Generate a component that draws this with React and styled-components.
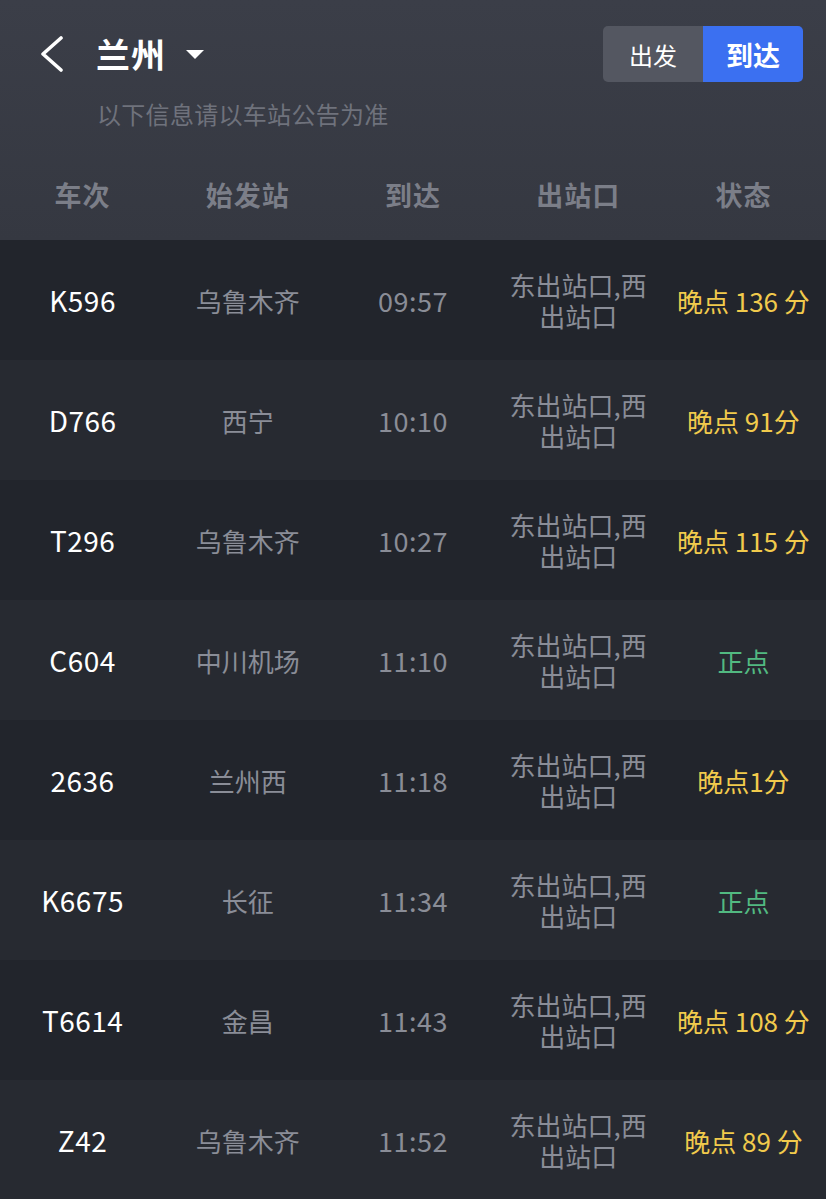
import React from 'react';
import styled, { createGlobalStyle } from 'styled-components';

const GlobalStyle = createGlobalStyle`
  html, body {
    margin: 0;
    padding: 0;
    background: #22252c;
  }
  body {
    font-family: "Noto Sans CJK SC", "Noto Sans", sans-serif;
  }
`;

const trains = [
  { no: 'K596', from: '乌鲁木齐', time: '09:57', exit: '东出站口,西出站口', status: '晚点 136 分', late: true },
  { no: 'D766', from: '西宁', time: '10:10', exit: '东出站口,西出站口', status: '晚点 91分', late: true },
  { no: 'T296', from: '乌鲁木齐', time: '10:27', exit: '东出站口,西出站口', status: '晚点 115 分', late: true },
  { no: 'C604', from: '中川机场', time: '11:10', exit: '东出站口,西出站口', status: '正点', late: false },
  { no: '2636', from: '兰州西', time: '11:18', exit: '东出站口,西出站口', status: '晚点1分', late: true },
  { no: 'K6675', from: '长征', time: '11:34', exit: '东出站口,西出站口', status: '正点', late: false },
  { no: 'T6614', from: '金昌', time: '11:43', exit: '东出站口,西出站口', status: '晚点 108 分', late: true },
  { no: 'Z42', from: '乌鲁木齐', time: '11:52', exit: '东出站口,西出站口', status: '晚点 89 分', late: true },
];

const Page = styled.div`
  width: 826px;
  min-height: 1199px;
  background: #22252c;
  overflow: hidden;
`;

const Header = styled.header`
  background: linear-gradient(#3b3e48, #353841);
  padding-top: 26px;
`;

const TopBar = styled.div`
  display: flex;
  align-items: center;
  height: 56px;
  padding: 0 23px 0 38px;
`;

const BackButton = styled.button`
  display: flex;
  align-items: center;
  background: none;
  border: none;
  padding: 0;
  width: 58px;
  height: 40px;
  cursor: pointer;
`;

const City = styled.div`
  display: flex;
  align-items: center;
  color: #ffffff;
  font-size: 34px;
  font-weight: 700;
  letter-spacing: 1px;
  flex: 1;
  margin-top: -2px;
`;

const Caret = styled.span`
  width: 0;
  height: 0;
  margin-left: 20px;
  margin-top: 2px;
  border-left: 9px solid transparent;
  border-right: 9px solid transparent;
  border-top: 9px solid #ffffff;
`;

const Toggle = styled.div`
  display: flex;
  border-radius: 5px;
  overflow: hidden;
  height: 56px;
`;

const ToggleItem = styled.div`
  width: 100px;
  display: flex;
  align-items: center;
  justify-content: center;
  font-size: ${p => (p.active ? '27px' : '24px')};
  font-weight: ${p => (p.active ? 700 : 400)};
  color: #ffffff;
  background: ${p => (p.active ? '#3b70f1' : '#545761')};
`;

const Notice = styled.div`
  margin: 15px 0 0 97px;
  font-size: 24px;
  line-height: 34px;
  color: #6f727c;
  letter-spacing: 0.3px;
`;

const Columns = styled.div`
  display: grid;
  grid-template-columns: repeat(5, 1fr);
  align-items: center;
  height: 84px;
  padding-bottom: 4px;
  margin-top: 21px;
`;

const ColTitle = styled.div`
  text-align: center;
  font-size: 27px;
  font-weight: 700;
  color: #7b7e88;
  letter-spacing: 1px;
`;

const Row = styled.div`
  display: grid;
  grid-template-columns: repeat(5, 1fr);
  align-items: center;
  height: 120px;
  background: ${p => (p.odd ? '#272a31' : '#22252c')};
`;

const Cell = styled.div`
  text-align: center;
  font-size: 26px;
  line-height: 31px;
  padding: 0 12px;
  color: #8a8d97;
`;

const TrainNo = styled(Cell)`
  color: #ffffff;
  font-size: 28px;
  letter-spacing: 0.5px;
`;

const Time = styled(Cell)`
  font-size: 27px;
  letter-spacing: 0.5px;
`;

const Status = styled(Cell)`
  padding: 0 4px;
  color: ${p => (p.late ? '#f1ca4c' : '#52b981')};
`;

function Chevron() {
  return (
    <svg width="26" height="36" viewBox="0 0 26 36">
      <polyline points="23,2 5,18 23,34" fill="none" stroke="#fff" strokeWidth="3.6" strokeLinecap="round" strokeLinejoin="round" />
    </svg>
  );
}

export default function App() {
  return (
    <Page>
      <GlobalStyle />
      <Header>
        <TopBar>
          <BackButton><Chevron /></BackButton>
          <City>兰州<Caret /></City>
          <Toggle>
            <ToggleItem>出发</ToggleItem>
            <ToggleItem active>到达</ToggleItem>
          </Toggle>
        </TopBar>
        <Notice>以下信息请以车站公告为准</Notice>
        <Columns>
          <ColTitle>车次</ColTitle>
          <ColTitle>始发站</ColTitle>
          <ColTitle>到达</ColTitle>
          <ColTitle>出站口</ColTitle>
          <ColTitle>状态</ColTitle>
        </Columns>
      </Header>
      {trains.map((t, i) => (
        <Row key={t.no} odd={i % 2 === 1}>
          <TrainNo>{t.no}</TrainNo>
          <Cell>{t.from}</Cell>
          <Time>{t.time}</Time>
          <Cell>{t.exit}</Cell>
          <Status late={t.late}>{t.status}</Status>
        </Row>
      ))}
    </Page>
  );
}
